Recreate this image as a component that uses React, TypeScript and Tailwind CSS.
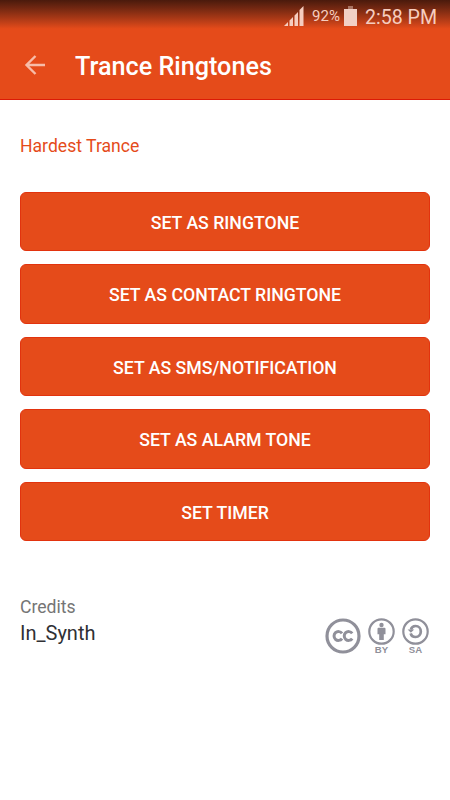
interface Action {
  id: string;
  label: string;
}

const actions: Action[] = [
  { id: "ringtone", label: "Set as ringtone" },
  { id: "contact", label: "Set as contact ringtone" },
  { id: "sms", label: "Set as SMS/Notification" },
  { id: "alarm", label: "Set as alarm tone" },
  { id: "timer", label: "Set timer" },
];

export default function App() {
  return (
    <div className="flex h-[800px] w-[450px] flex-col overflow-hidden bg-white font-[Roboto,sans-serif]">
      <header className="h-[100px] shrink-0 border-b border-[#dc1a06] bg-[#e54b1a]">
        <StatusBar />
        <AppBar title="Trance Ringtones" />
      </header>
      <main className="px-5">
        <h2 className="mt-[34px] text-[17.6px] leading-6 text-[#e54b1a]">Hardest Trance</h2>
        <div className="mt-[33.9px] flex flex-col gap-[13px]">
          {actions.map((action) => (
            <button
              key={action.id}
              className="h-[59.5px] rounded-md border border-[#e2330e] bg-[#e54b1a] pt-[2.5px] text-[17.7px] font-medium text-white uppercase"
            >
              {action.label}
            </button>
          ))}
        </div>
        <Credits author="In_Synth" />
      </main>
    </div>
  );
}

function StatusBar() {
  return (
    <div className="flex h-8 items-center justify-end bg-linear-to-b from-[#4a1a0c] to-[#e54b1a] to-90% pr-[13px] text-[#f6cdbf]">
      <SignalIcon />
      <span className="mt-px ml-2 text-[15px] leading-none">92%</span>
      <BatteryIcon />
      <span className="mt-[3px] ml-2 text-[19.6px] leading-none">2:58 PM</span>
    </div>
  );
}

function AppBar({ title }: { title: string }) {
  return (
    <div className="flex h-[66px] items-center pl-6">
      <button aria-label="Back">
        <svg width="22" height="22" viewBox="0 0 22 22" fill="none" stroke="#f7bca8" strokeWidth="2.4">
          <path d="M21 11H3M11.5 2 2.500 11l9 9" />
        </svg>
      </button>
      <h1 className="mt-[3px] ml-[29px] text-[25.2px] leading-none font-medium text-white">{title}</h1>
    </div>
  );
}

function Credits({ author }: { author: string }) {
  return (
    <footer className="mt-[53px] flex justify-between">
      <div>
        <p className="text-[17.6px] leading-[26px] text-[#757575]">Credits</p>
        <p className="text-[20px] leading-[26px] text-[#303034]">{author}</p>
      </div>
      <div className="mt-[23.5px] mr-px flex gap-[7px] text-[#90909a]">
        <CcIcon />
        <div className="flex w-[27px] flex-col items-center">
          <ByIcon />
          <LicenseLabel>BY</LicenseLabel>
        </div>
        <div className="flex w-[27px] flex-col items-center">
          <SaIcon />
          <LicenseLabel>SA</LicenseLabel>
        </div>
      </div>
    </footer>
  );
}

function LicenseLabel({ children }: { children: string }) {
  return (
    <span className="font-['Liberation_Sans',sans-serif] text-[9.6px] leading-[10px] font-bold">{children}</span>
  );
}

function SignalIcon() {
  return (
    <svg width="20" height="20" viewBox="0 0 20 20" fill="currentColor">
      <path d="M0 20 4 16v4zM5.500 14.500l3.500-3.500V20H5.500zM10.500 9.500 14 6v14h-3.500zM15.500 4 19.500 0V20h-4z" />
    </svg>
  );
}

function BatteryIcon() {
  return (
    <svg className="ml-1" width="13" height="20" viewBox="0 0 13 20">
      <path d="M4 0h5v3H4z" fill="#a87463" />
      <path d="M0 3h13v17H0z" fill="#f2d0c5" />
    </svg>
  );
}

function CcIcon() {
  return (
    <svg width="36" height="36" viewBox="0 0 36 36" fill="none" stroke="currentColor">
      <circle cx="18" cy="18" r="16" strokeWidth="3.2" />
      <path d="M17 15.400a4.400 4.400 0 1 0 0 5.200M27.200 15.400a4.400 4.400 0 1 0 0 5.200" strokeWidth="3" />
    </svg>
  );
}

function ByIcon() {
  return (
    <svg width="27" height="27" viewBox="0 0 27 27">
      <circle cx="13.500" cy="13.500" r="12.200" fill="none" stroke="currentColor" strokeWidth="2.200" />
      <circle cx="13.500" cy="7" r="2.200" fill="currentColor" />
      <path d="M10.500 9.800h6q1 0 1 1v5.400h-1.700V22h-4.600v-5.800H9.500v-5.400q0-1 1-1z" fill="currentColor" />
    </svg>
  );
}

function SaIcon() {
  return (
    <svg width="27" height="27" viewBox="0 0 27 27" fill="none" stroke="currentColor">
      <circle cx="13.500" cy="13.500" r="12.200" strokeWidth="2.200" />
      <path d="M8.900 11.600C9.500 9.200 11.400 8 13.600 8c3.100 0 5.200 2.400 5.200 5.500s-2.100 5.500-5.200 5.500c-2.500 0-4.400-1.300-4.900-3.600" strokeWidth="2.700" />
      <path d="M5.600 11.500h6.600l-3.300 3.300z" fill="currentColor" stroke="none" />
    </svg>
  );
}
